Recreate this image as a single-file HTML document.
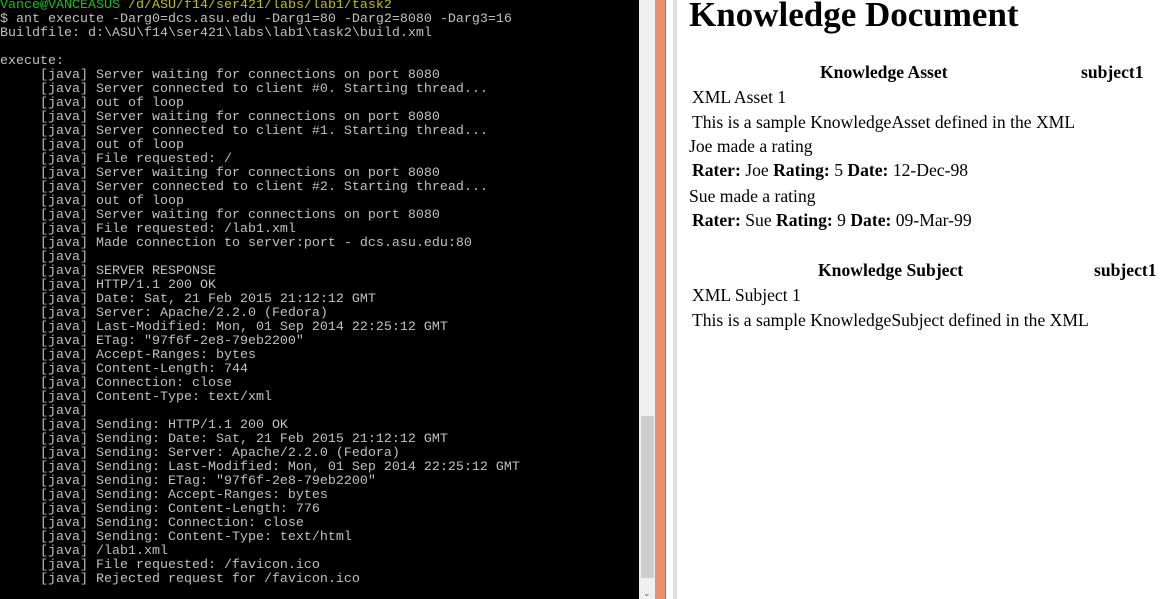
<!DOCTYPE html>
<html><head><meta charset="utf-8"><style>
body{margin:0;width:1161px;height:599px;position:relative;overflow:hidden;background:#fff}
#term{position:absolute;left:0;top:0;width:639px;height:599px;background:#000;}
#term pre{margin:0;font-family:"Liberation Mono",monospace;font-size:13.33px;line-height:14px;color:#c0c0c0;white-space:pre;position:absolute;top:-1px;left:0}
.g{color:#13c313}.y{color:#c0c000}
#sb{position:absolute;left:639px;top:0;width:16px;height:599px;background:#f0f0f0}
#thumb{position:absolute;left:641px;top:416px;width:13px;height:162px;background:#cdcdcd}
#or{position:absolute;left:655px;top:0;width:10px;height:599px;background:#e8916a;border-right:1px solid #b07050}
#pg{position:absolute;left:666px;top:0;width:7px;height:599px;background:#fff;border-right:4px solid #e0e0e0}
.t{position:absolute;font-family:"Liberation Serif",serif;font-size:17.6px;color:#000;white-space:nowrap;line-height:18px}
.b{font-weight:bold}
h1{position:absolute;left:689px;top:-5px;margin:0;font-family:"Liberation Serif",serif;font-size:35px;font-weight:bold;white-space:nowrap}
</style></head><body>
<div id="term"><pre><span class="g">Vance@VANCEASUS</span> <span class="y">/d/ASU/f14/ser421/labs/lab1/task2</span>
$ ant execute -Darg0=dcs.asu.edu -Darg1=80 -Darg2=8080 -Darg3=16
Buildfile: d:\ASU\f14\ser421\labs\lab1\task2\build.xml

execute:
     [java] Server waiting for connections on port 8080
     [java] Server connected to client #0. Starting thread...
     [java] out of loop
     [java] Server waiting for connections on port 8080
     [java] Server connected to client #1. Starting thread...
     [java] out of loop
     [java] File requested: /
     [java] Server waiting for connections on port 8080
     [java] Server connected to client #2. Starting thread...
     [java] out of loop
     [java] Server waiting for connections on port 8080
     [java] File requested: /lab1.xml
     [java] Made connection to server:port - dcs.asu.edu:80
     [java]
     [java] SERVER RESPONSE
     [java] HTTP/1.1 200 OK
     [java] Date: Sat, 21 Feb 2015 21:12:12 GMT
     [java] Server: Apache/2.2.0 (Fedora)
     [java] Last-Modified: Mon, 01 Sep 2014 22:25:12 GMT
     [java] ETag: "97f6f-2e8-79eb2200"
     [java] Accept-Ranges: bytes
     [java] Content-Length: 744
     [java] Connection: close
     [java] Content-Type: text/xml
     [java]
     [java] Sending: HTTP/1.1 200 OK
     [java] Sending: Date: Sat, 21 Feb 2015 21:12:12 GMT
     [java] Sending: Server: Apache/2.2.0 (Fedora)
     [java] Sending: Last-Modified: Mon, 01 Sep 2014 22:25:12 GMT
     [java] Sending: ETag: "97f6f-2e8-79eb2200"
     [java] Sending: Accept-Ranges: bytes
     [java] Sending: Content-Length: 776
     [java] Sending: Connection: close
     [java] Sending: Content-Type: text/html
     [java] /lab1.xml
     [java] File requested: /favicon.ico
     [java] Rejected request for /favicon.ico</pre></div>
<div id="sb"></div><div id="thumb"></div>
<div style="position:absolute;left:643px;top:588px;font:9px 'Liberation Sans',sans-serif;color:#666">&#8964;</div>
<div id="or"></div><div id="pg"></div>
<h1>Knowledge Document</h1>
<div class="t b" style="left:820px;top:63px">Knowledge Asset</div>
<div class="t b" style="left:1081px;top:63px">subject1</div>
<div class="t" style="left:692px;top:88px">XML Asset 1</div>
<div class="t" style="left:692px;top:113px">This is a sample KnowledgeAsset defined in the XML</div>
<div class="t" style="left:689px;top:137px">Joe made a rating</div>
<div class="t" style="left:692px;top:161px"><b>Rater:</b> Joe <b>Rating:</b> 5 <b>Date:</b> 12-Dec-98</div>
<div class="t" style="left:689px;top:187px">Sue made a rating</div>
<div class="t" style="left:692px;top:211px"><b>Rater:</b> Sue <b>Rating:</b> 9 <b>Date:</b> 09-Mar-99</div>
<div class="t b" style="left:818px;top:261px">Knowledge Subject</div>
<div class="t b" style="left:1094px;top:261px">subject1</div>
<div class="t" style="left:692px;top:286px">XML Subject 1</div>
<div class="t" style="left:692px;top:311px">This is a sample KnowledgeSubject defined in the XML</div>
</body></html>
